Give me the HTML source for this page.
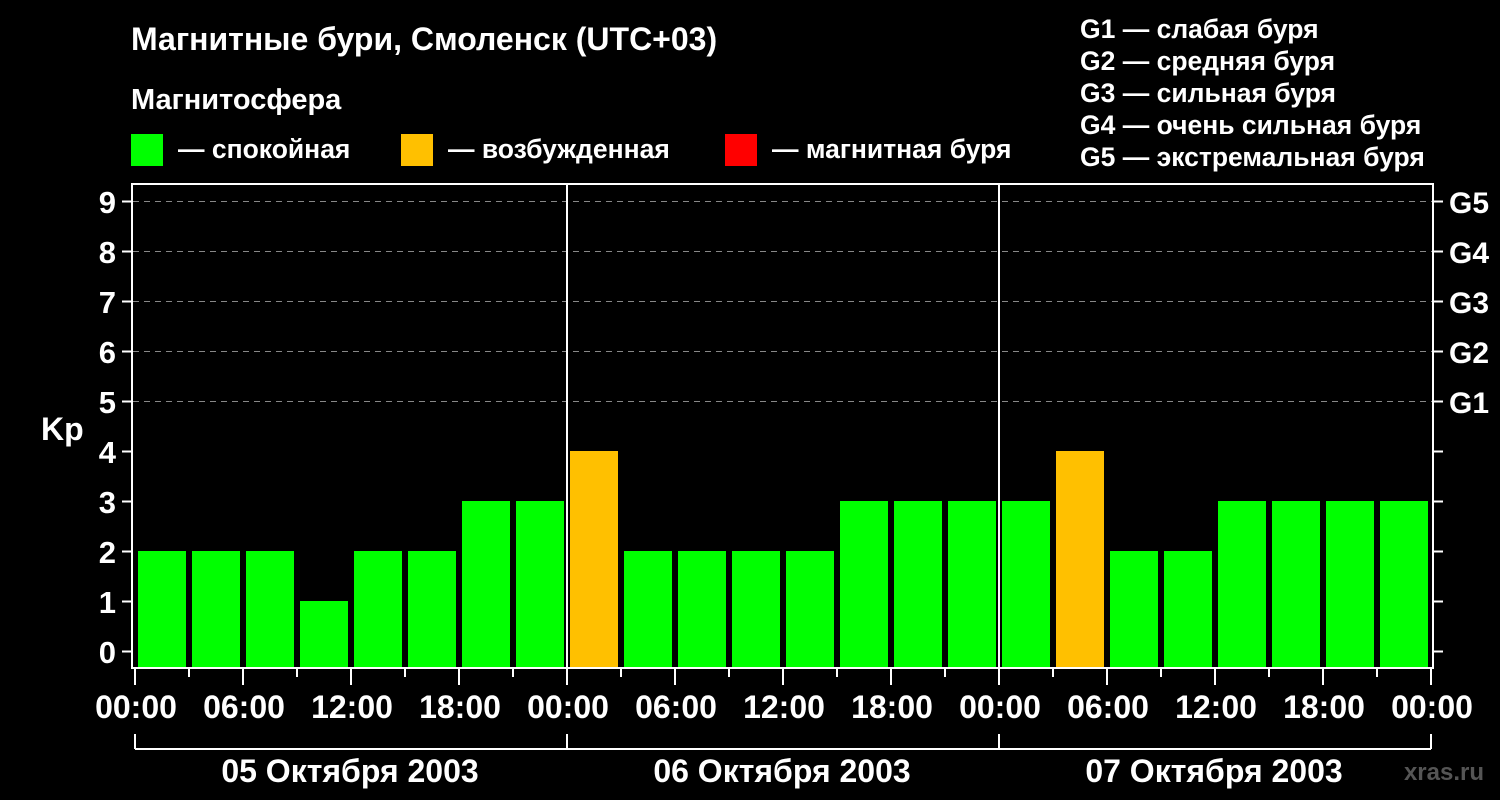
<!DOCTYPE html>
<html><head><meta charset="utf-8"><style>
html,body{margin:0;padding:0;background:#000;}
svg{display:block;font-family:"Liberation Sans",Arial,sans-serif;font-weight:bold;}
</style></head><body>
<svg width="1500" height="800" viewBox="0 0 1500 800" xmlns="http://www.w3.org/2000/svg">
<rect width="1500" height="800" fill="#000"/>
<g fill="#fff" font-size="26.5">
<text x="131" y="50" font-size="32">Магнитные бури, Смоленск (UTC+03)</text>
<text x="131" y="109" font-size="29">Магнитосфера</text>
<text x="178" y="158">— спокойная</text>
<text x="448" y="158">— возбужденная</text>
<text x="772" y="158">— магнитная буря</text>
<text x="1080" y="38">G1 — слабая буря</text>
<text x="1080" y="70">G2 — средняя буря</text>
<text x="1080" y="102">G3 — сильная буря</text>
<text x="1080" y="134">G4 — очень сильная буря</text>
<text x="1080" y="166">G5 — экстремальная буря</text>
</g>
<rect x="131" y="134" width="32" height="32" fill="#00ff00"/>
<rect x="401" y="134" width="32" height="32" fill="#ffc000"/>
<rect x="725" y="134" width="32" height="32" fill="#ff0000"/>
<g stroke="#888" stroke-width="1" stroke-dasharray="6,5">
<line x1="133" y1="201.5" x2="1433" y2="201.5"/>
<line x1="133" y1="251.5" x2="1433" y2="251.5"/>
<line x1="133" y1="301.5" x2="1433" y2="301.5"/>
<line x1="133" y1="351.5" x2="1433" y2="351.5"/>
<line x1="133" y1="401.5" x2="1433" y2="401.5"/>
</g>
<g fill="#00ff00">
<rect x="138" y="551" width="48" height="117"/>
<rect x="192" y="551" width="48" height="117"/>
<rect x="246" y="551" width="48" height="117"/>
<rect x="300" y="601" width="48" height="67"/>
<rect x="354" y="551" width="48" height="117"/>
<rect x="408" y="551" width="48" height="117"/>
<rect x="462" y="501" width="48" height="167"/>
<rect x="516" y="501" width="48" height="167"/>
<rect x="624" y="551" width="48" height="117"/>
<rect x="678" y="551" width="48" height="117"/>
<rect x="732" y="551" width="48" height="117"/>
<rect x="786" y="551" width="48" height="117"/>
<rect x="840" y="501" width="48" height="167"/>
<rect x="894" y="501" width="48" height="167"/>
<rect x="948" y="501" width="48" height="167"/>
<rect x="1002" y="501" width="48" height="167"/>
<rect x="1110" y="551" width="48" height="117"/>
<rect x="1164" y="551" width="48" height="117"/>
<rect x="1218" y="501" width="48" height="167"/>
<rect x="1272" y="501" width="48" height="167"/>
<rect x="1326" y="501" width="48" height="167"/>
<rect x="1380" y="501" width="48" height="167"/>
</g>
<g fill="#ffc000">
<rect x="570" y="451" width="48" height="217"/>
<rect x="1056" y="451" width="48" height="217"/>
</g>
<g stroke="#fff" stroke-width="2" fill="none">
<rect x="132" y="184" width="1301" height="484"/>
<line x1="567" y1="183" x2="567" y2="668"/>
<line x1="999" y1="183" x2="999" y2="668"/>
<path d="M122 201.5h9M122 251.5h9M122 301.5h9M122 351.5h9M122 401.5h9M122 451.5h9M122 501.5h9M122 551.5h9M122 601.5h9M122 651.5h9"/>
<path d="M1434 201.5h9M1434 251.5h9M1434 301.5h9M1434 351.5h9M1434 401.5h9M1434 451.5h9M1434 501.5h9M1434 551.5h9M1434 601.5h9M1434 651.5h9"/>
<path d="M135 669v16M189 669v8M243 669v16M297 669v8M351 669v16M405 669v8M459 669v16M513 669v8M567 669v16M621 669v8M675 669v16M729 669v8M783 669v16M837 669v8M891 669v16M945 669v8M999 669v16M1053 669v8M1107 669v16M1161 669v8M1215 669v16M1269 669v8M1323 669v16M1377 669v8M1431 669v16"/>
<path d="M135 734v15M567 734v15M999 734v15M1431 734v15M135 749H1431"/>
</g>
<g fill="#fff" font-size="31" text-anchor="end">
<text x="116" y="213">9</text><text x="116" y="263">8</text><text x="116" y="313">7</text><text x="116" y="363">6</text><text x="116" y="413">5</text><text x="116" y="463">4</text><text x="116" y="513">3</text><text x="116" y="563">2</text><text x="116" y="613">1</text><text x="116" y="663">0</text>
</g>
<text x="41" y="440" fill="#fff" font-size="32">Kp</text>
<g fill="#fff" font-size="30">
<text x="1449" y="213">G5</text><text x="1449" y="263">G4</text><text x="1449" y="313">G3</text><text x="1449" y="363">G2</text><text x="1449" y="413">G1</text>
</g>
<g fill="#fff" font-size="32" text-anchor="middle">
<text x="136" y="718">00:00</text><text x="244" y="718">06:00</text><text x="352" y="718">12:00</text><text x="460" y="718">18:00</text><text x="568" y="718">00:00</text><text x="676" y="718">06:00</text><text x="784" y="718">12:00</text><text x="892" y="718">18:00</text><text x="1000" y="718">00:00</text><text x="1108" y="718">06:00</text><text x="1216" y="718">12:00</text><text x="1324" y="718">18:00</text><text x="1432" y="718">00:00</text>
<text x="350" y="782">05 Октября 2003</text><text x="782" y="782">06 Октября 2003</text><text x="1214" y="782">07 Октября 2003</text>
</g>
<text x="1484" y="780" fill="#555" font-size="24" text-anchor="end">xras.ru</text>
</svg>
</body></html>
